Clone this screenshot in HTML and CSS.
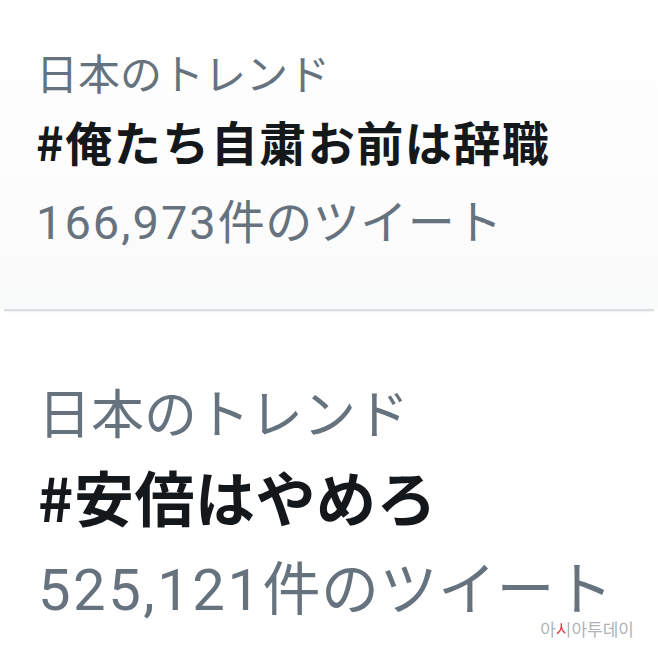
FILE: index.html
```html
<!DOCTYPE html>
<html lang="ja">
<head>
  <meta charset="UTF-8">
  <meta name="viewport" content="width=device-width, initial-scale=1.0">
  <title>日本のトレンド</title>
  <link rel="stylesheet" href="styles.css">
</head>
<body>
  <main class="trends">
    <section class="trend trend-first">
      <p class="trend-label">日本のトレンド</p>
      <p class="trend-tag">#俺たち自粛お前は辞職</p>
      <p class="trend-count"><span class="num">166,973</span>件のツイート</p>
    </section>

    <hr class="divider">

    <section class="trend trend-second">
      <p class="trend-label">日本のトレンド</p>
      <p class="trend-tag">#安倍はやめろ</p>
      <p class="trend-count"><span class="num">525,121</span>件のツイート</p>
    </section>

    <div class="watermark">아<span class="accent">시</span>아투데이</div>
  </main>
</body>
</html>
```

FILE: styles.css
```css
/* General Styling */
body {
  margin: 0;
  padding: 0;
  background-color: #fff;
  font-family: "Noto Sans CJK JP", "Noto Sans", sans-serif;
}

.trends {
  position: relative;
  width: 658px;
  height: 658px;
  overflow: hidden;
}

.trend p {
  margin: 0;
  white-space: nowrap;
}

/* Labels */
.trend-label {
  color: #66737f;
}

.trend-tag {
  color: #15181b;
  font-weight: 700;
}

.trend-count {
  color: #66737f;
}

.trend-count .num {
  font-family: "Roboto", "Liberation Sans", sans-serif;
  letter-spacing: 2px;
}

/* First trend */
.trend-first {
  padding: 38px 0 47px 36px;
  background: linear-gradient(#fff, #fcfcfc 70%, #f9fafa);
  height: 224px;
}

.trend-first .trend-label {
  font-size: 42px;
  line-height: 68px;
}

.trend-first .trend-tag {
  font-size: 47px;
  line-height: 70px;
  letter-spacing: 1.5px;
}

.trend-first .trend-count {
  font-size: 47px;
  line-height: 86px;
  letter-spacing: 0.5px;
}

/* Divider */
.divider {
  margin: 0 4px;
  height: 2px;
  border: none;
  background: #d9dee2;
  box-shadow: 0 1px 2px rgba(0, 0, 0, 0.06);
}

/* Second trend */
.trend-second {
  padding: 57px 0 0 38px;
}

.trend-second .trend-label {
  font-size: 53px;
  line-height: 86px;
}

.trend-second .trend-tag {
  font-size: 60px;
  line-height: 84px;
  letter-spacing: 0.5px;
}

.trend-second .trend-count {
  font-size: 58px;
  line-height: 94px;
  height: 70px;
  letter-spacing: 0.5px;
}

.trend-second .trend-count .num {
  letter-spacing: 2.5px;
}

/* Watermark */
.watermark {
  position: absolute;
  right: 24px;
  top: 619px;
  font-family: "Noto Sans CJK KR", sans-serif;
  font-size: 17px;
  line-height: 20px;
  color: #aeb3b8;
  text-shadow: 0 0 2px #fff, 0 0 1px #fff;
}

.watermark .accent {
  background: linear-gradient(90deg, #e0383e 58%, #aeb3b8 58%);
  -webkit-background-clip: text;
  background-clip: text;
  color: transparent;
  text-shadow: none;
}
```
